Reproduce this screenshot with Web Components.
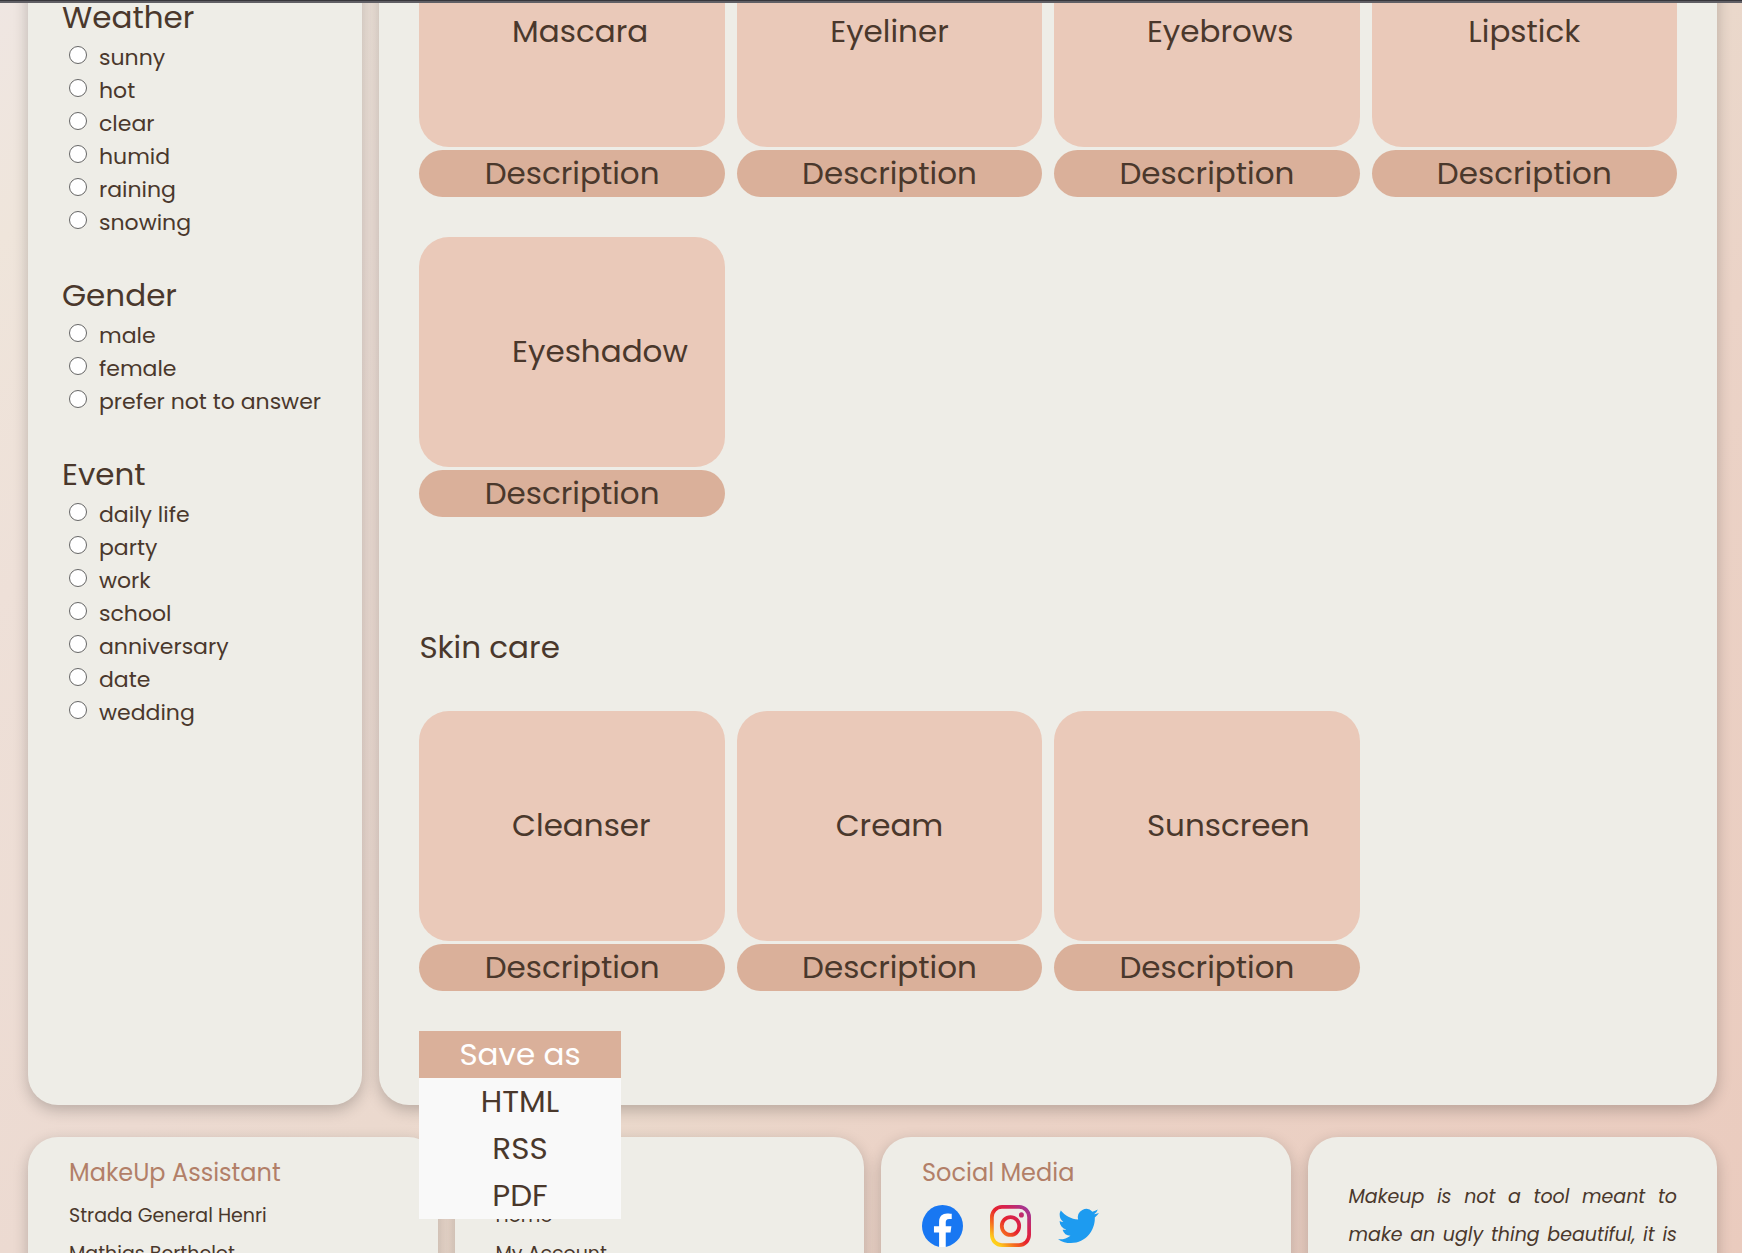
<!DOCTYPE html>
<html lang="en">
<head>
<meta charset="utf-8">
<title>MakeUp Assistant</title>
<style>
html, body { margin: 0; height: 100%; overflow: hidden; }
body {
  --ink: #4a382c; --panel: #eeede7; --card: #eac9b9; --pill: #dab09a; --title: #b27f68;
  --lift: 0 5px 15px rgba(0,0,0,.22);
  color: var(--ink);
  font-family: Poppins, Inter, "Liberation Sans", sans-serif;
  font-weight: 400;
  font-size: 31px;
  line-height: 47px;
  background: linear-gradient(135deg, #efe6e2 0%, #efe5db 8%, #eee0d8 20%, #ecdad1 42%, #ead8cb 58%, #ebd3c7 68%, #eacbbe 100%);
}
</style>
</head>
<body>
<makeup-app></makeup-app>
<script>
const define = (name, html, setup) => customElements.define(name, class extends HTMLElement {
  constructor() {
    super();
    const tpl = document.createElement('template');
    tpl.innerHTML = html;
    this.attachShadow({ mode: 'open' }).append(tpl.content.cloneNode(true));
  }
  connectedCallback() { if (setup) setup(this, this.shadowRoot); }
});

define('surface-panel', `
<style>
:host { display: block; box-sizing: border-box; border-radius: 30px; background: var(--panel); box-shadow: var(--lift); }
</style>
<slot></slot>`);

define('option-group', `
<style>
:host { display: block; }
fieldset { border: 0; margin: 0; padding: 0; min-width: 0; }
legend { padding: 0; line-height: 48px; }
label { display: flex; gap: 12px; padding-left: 7px; font-size: 22px; line-height: 33px; align-items: flex-start; }
input { appearance: none; box-sizing: border-box; width: 18px; height: 18px; margin: 5px 0 0; border: 1px solid #666; border-radius: 50%; background: #fff; flex: none; }
input:checked { background: radial-gradient(#4a382c 45%, #fff 50%); }
</style>
<fieldset><legend></legend><div></div></fieldset>`, (host, root) => {
  const name = host.getAttribute('name');
  root.querySelector('legend').textContent = name;
  root.querySelector('div').innerHTML = host.getAttribute('options').split(',')
    .map(o => `<label><input type="radio" name="${name}" value="${o}"><span>${o}</span></label>`).join('');
});

define('product-card', `
<style>
:host { display: flex; flex-direction: column; gap: 3px; }
.picture { box-sizing: border-box; height: 230px; padding-bottom: 2px; border-radius: 30px; background: var(--card); display: flex; align-items: center; justify-content: center; }
.name { width: 120px; text-align: center; white-space: nowrap; }
button { font: inherit; color: inherit; border: 0; margin: 0; padding: 0; height: 47px; border-radius: 24px; background: var(--pill); }
</style>
<div class="picture"><div class="name"><slot></slot></div></div>
<button type="button">Description</button>`);

define('product-grid', `
<style>
:host { display: grid; grid-template-columns: repeat(4, minmax(0, 1fr)); gap: 40px 12px; }
</style>
<slot></slot>`);

define('save-menu', `
<style>
:host { display: inline-block; position: relative; vertical-align: top; }
button { display: block; font: inherit; color: #fff; background: var(--pill); border: 0; margin: 0; padding: 0 40px; height: 47px; }
nav { position: absolute; z-index: 2; top: 100%; left: 0; right: 0; background: #f9f9f9; }
a { display: block; text-align: center; color: inherit; text-decoration: none; }
</style>
<button type="button" aria-haspopup="true" aria-expanded="true">Save as</button>
<nav><a href="#html">HTML</a><a href="#rss">RSS</a><a href="#pdf">PDF</a></nav>`);

define('footer-card', `
<style>
:host { display: block; padding: 17px 40px 17px 41px; box-sizing: border-box; border-radius: 30px; background: var(--panel); box-shadow: var(--lift); font-size: 19px; line-height: 38px; }
h2 { margin: 0 0 5px; height: 38px; font-size: 24px; font-weight: 400; color: var(--title); }
</style>
<h2></h2><slot></slot>`, (host, root) => {
  root.querySelector('h2').textContent = host.getAttribute('heading') || '';
});

define('social-links', `
<style>
:host { display: flex; gap: 27px; padding-top: 8px; }
a, svg { display: block; width: 41px; height: 42px; }
</style>
<a href="#facebook" aria-label="Facebook"><svg viewBox="0 0 24 24" preserveAspectRatio="none"><circle cx="12" cy="12" r="12" fill="#1877f2"/><path fill="#fff" d="M16.7 15.700l.5-3.500h-3.300V9.900c0-1 .5-1.900 2-1.900h1.500V5s-1.400-.2-2.700-.2c-2.700 0-4.700 1.600-4.700 4.700v2.700h-3v3.500h3V24h3.900v-8.300z"/></svg></a>
<a href="#instagram" aria-label="Instagram"><svg viewBox="0 0 24 24" preserveAspectRatio="none"><defs><linearGradient id="g" x1="0" y1="1" x2="1" y2="0"><stop offset="0" stop-color="#fd1"/><stop offset=".14" stop-color="#fecb1d"/><stop offset=".32" stop-color="#f56a1f"/><stop offset=".5" stop-color="#e6232e"/><stop offset=".68" stop-color="#d52352"/><stop offset="1" stop-color="#8f3fb0"/></linearGradient></defs><path fill="url(#g)" fill-rule="evenodd" d="M7 0h10a7 7 0 0 1 7 7v10a7 7 0 0 1-7 7H7a7 7 0 0 1-7-7V7a7 7 0 0 1 7-7zm0 2.200A4.800 4.800 0 0 0 2.200 7v10A4.800 4.800 0 0 0 7 21.800h10a4.800 4.800 0 0 0 4.800-4.800V7A4.800 4.800 0 0 0 17 2.200zM12 5.800a6.200 6.200 0 1 1 0 12.400 6.200 6.200 0 0 1 0-12.400zm0 2.200a4 4 0 1 0 0 8 4 4 0 0 0 0-8zM18.400 4.200a1.450 1.450 0 1 1 0 2.900 1.450 1.450 0 0 1 0-2.900z"/></svg></a>
<a href="#twitter" aria-label="Twitter"><svg viewBox="0 0 24 24" preserveAspectRatio="none"><path fill="#1d9bf0" d="M23.954 4.569a10 10 0 0 1-2.825.775 4.958 4.958 0 0 0 2.163-2.723c-.951.555-2.005.959-3.127 1.184a4.920 4.920 0 0 0-8.384 4.482C7.691 8.094 4.066 6.130 1.640 3.161a4.822 4.822 0 0 0-.666 2.475c0 1.710.870 3.213 2.188 4.096a4.904 4.904 0 0 1-2.228-.616v.061a4.923 4.923 0 0 0 3.946 4.827 4.996 4.996 0 0 1-2.212.085 4.937 4.937 0 0 0 4.604 3.417 9.868 9.868 0 0 1-6.102 2.105c-.390 0-.779-.023-1.170-.067a13.995 13.995 0 0 0 7.557 2.209c9.054 0 13.999-7.496 13.999-13.986 0-.209 0-.420-.015-.630a9.936 9.936 0 0 0 2.413-2.568z"/></svg></a>`);

define('justified-quote', `
<style>
:host { display: block; font-style: italic; text-align: justify; text-align-last: justify; line-height: 38px; }
span { display: block; }
</style>
<span>Makeup is not a tool meant to</span><span>make an ugly thing beautiful, it is</span>`);

define('makeup-app', `
<style>
:host { display: block; }
.bar { position: relative; z-index: 3; height: 2px; border-top: 1px solid #37363b; background: #605f65; }
.page { margin-top: -126px; padding: 0 25px 0 28px; display: flex; flex-direction: column; gap: 32px; }
.columns { display: grid; grid-template-columns: minmax(0, 1fr) minmax(0, 4fr); gap: 17px; }
.filters { padding: 116px 34px 27px; display: flex; flex-direction: column; gap: 32px; }
main { padding: 40px 40px 27px; }
h2 { margin: 107px 0 40px; font: inherit; }
save-menu { margin-top: 40px; }
footer { display: grid; grid-template-columns: repeat(4, minmax(0, 1fr)); gap: 17px; }
ul { list-style: none; margin: 0; padding: 0; }
a { color: inherit; text-decoration: none; }
justified-quote { margin-top: -19px; }
</style>
<div class="bar"></div>
<div class="page">
  <div class="columns">
    <surface-panel><form class="filters">
      <option-group name="Weather" options="sunny,hot,clear,humid,raining,snowing"></option-group>
      <option-group name="Gender" options="male,female,prefer not to answer"></option-group>
      <option-group name="Event" options="daily life,party,work,school,anniversary,date,wedding"></option-group>
    </form></surface-panel>
    <surface-panel><main>
      <product-grid>
        <product-card>Mascara</product-card><product-card>Eyeliner</product-card>
        <product-card>Eyebrows</product-card><product-card>Lipstick</product-card>
        <product-card>Eyeshadow</product-card>
      </product-grid>
      <h2>Skin care</h2>
      <product-grid>
        <product-card>Cleanser</product-card><product-card>Cream</product-card><product-card>Sunscreen</product-card>
      </product-grid>
      <save-menu></save-menu>
    </main></surface-panel>
  </div>
  <footer>
    <footer-card heading="MakeUp Assistant"><ul><li>Strada General Henri</li><li>Mathias Berthelot</li></ul></footer-card>
    <footer-card><ul><li><a href="#home">Home</a></li><li><a href="#account">My Account</a></li></ul></footer-card>
    <footer-card heading="Social Media"><social-links></social-links></footer-card>
    <footer-card><justified-quote></justified-quote></footer-card>
  </footer>
</div>`);
</script>
</body>
</html>
